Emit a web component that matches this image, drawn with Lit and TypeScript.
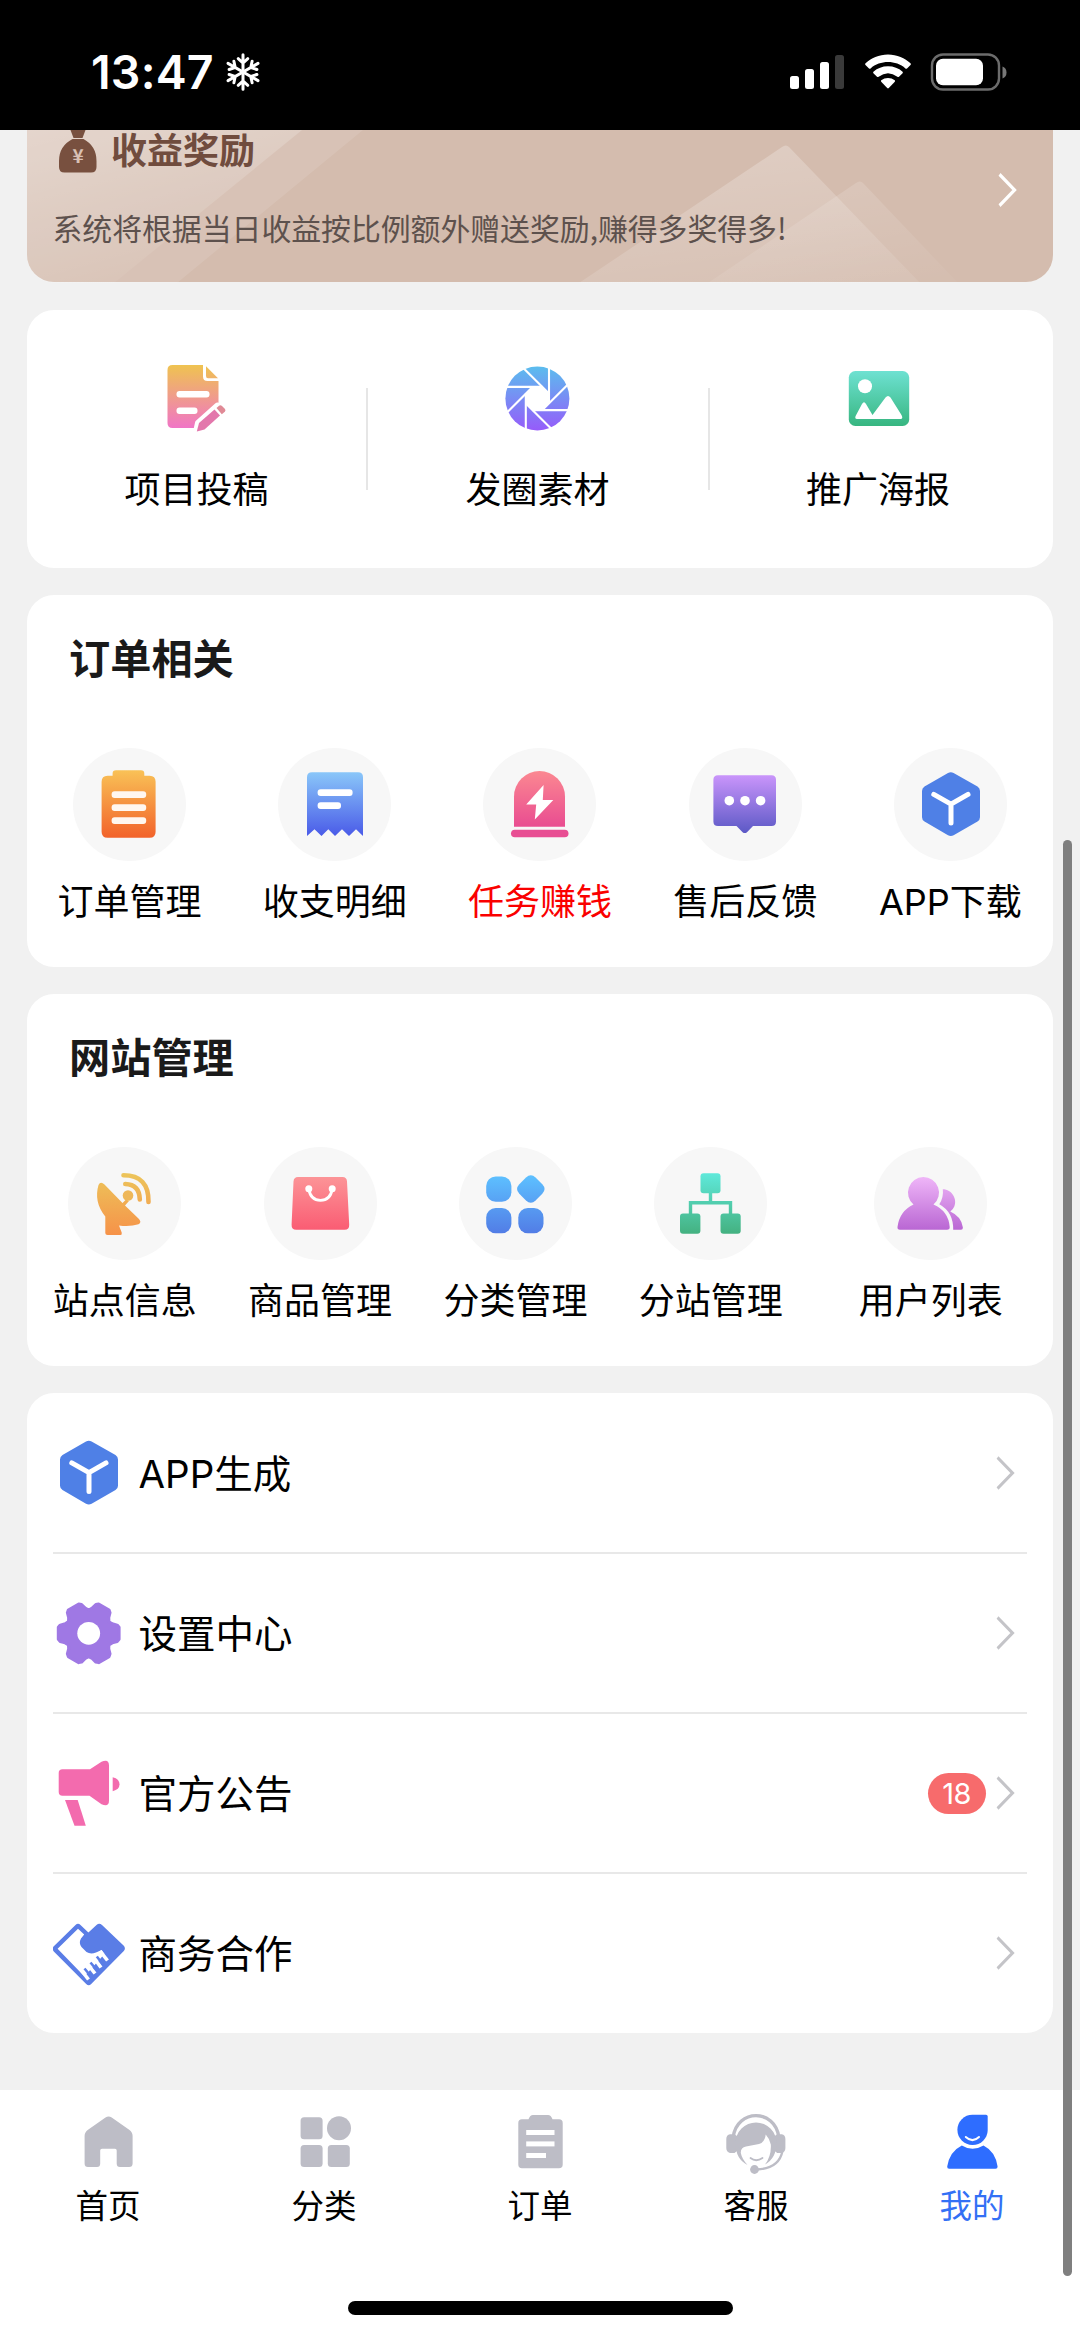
import { LitElement, html, svg, css } from "lit";
import type { TemplateResult } from "lit";
import { customElement } from "lit/decorators.js";
import { classMap } from "lit/directives/class-map.js";

const grad = (id: string, y1: number, y2: number, from: string, to: string) => svg`
  <defs><linearGradient id=${id} gradientUnits="userSpaceOnUse" x1="0" y1=${y1} x2="0" y2=${y2}>
    <stop offset="0" stop-color=${from}></stop><stop offset="1" stop-color=${to}></stop>
  </linearGradient></defs>`;

// Six teeth, each a flat outer edge joined to its neighbours by a sharp valley.
const gearPath = (() => {
  const pts: string[] = [];
  for (let k = 0; k < 6; k++) {
    const a = (k * Math.PI) / 3;
    for (const [x, y] of [[23.5, -9.6], [28.5, -8.2], [30.4, -6], [30.4, 6], [28.5, 8.2], [23.5, 9.6], [20.2, 11.7]]) {
      pts.push(`${(x * Math.cos(a) - y * Math.sin(a)).toFixed(2)} ${(x * Math.sin(a) + y * Math.cos(a)).toFixed(2)}`);
    }
  }
  return `M${pts.join("L")}Z`;
})();

const icons: Record<string, TemplateResult | ReturnType<typeof svg>> = {
  // 70 x 70 shortcuts
  submit: svg`${grad("gSubmit", 2, 66, "#efc350", "#f074c8")}
    <g transform="translate(-1.500 0)">
    <path fill="url(#gSubmit)" d="M12 2H42.500V13.500Q42.500 18 47 18H58V43L42.500 62.500 41.500 65H12Q7 65 7 60V7Q7 2 12 2Z"/>
    <path fill="url(#gSubmit)" d="M45.500 3.200 57.500 15.200H47.500Q45.500 15.200 45.500 13Z"/>
    <rect x="16" y="28" width="33" height="6.500" rx="3" fill="#fff"/>
    <rect x="16" y="44.500" width="21" height="6.500" rx="3" fill="#fff"/>
    <path stroke="#fff" stroke-width="7" stroke-linejoin="round" fill="#fff" d="M36 69 38 60 57 43 65 47 44 66Z"/>
    <path fill="#e377ac" d="M36.300 68.500 38.500 60 54 46.500 59.500 52.500 44 66.500Z"/>
    <path fill="#e08a96" d="M56 45 58.500 42.800Q60 41.800 61.500 43L64.500 46Q65.500 47.500 64.300 48.800L61.300 51.200Z"/></g>`,
  moments: svg`${grad("gMoments", 3, 67, "#5bbdee", "#965bfa")}
    <g transform="translate(-.6 .5)">
    <circle cx="35" cy="35" r="32" fill="url(#gMoments)"/>
    <g fill="none" stroke="#fff" stroke-width="2.100">
      ${[0, 45, 90, 135, 180, 225, 270, 315].map(
        (a) => svg`<path transform=${`rotate(${a} 35 35)`} d="M46.600 1V40"/>`
      )}
    </g>
    <path fill="#fff" transform="translate(35 35)" d="M11.500-4.800V4.800L4.800 11.500H-4.800L-11.500 4.800V-4.800L-4.800-11.500H4.800Z"/></g>`,
  poster: svg`${grad("gPoster", 7, 63, "#6fe2d3", "#37b680")}
    <rect x="4.800" y="8" width="60.400" height="55" rx="6.500" fill="url(#gPoster)"/>
    <circle cx="21" cy="23.200" r="7" fill="#fff"/>
    <path fill="#fff" d="M13 56Q10.500 56 11.600 53L18 41Q20 37.500 22 41L28.500 52 41.500 34.500Q44 31.500 46.500 34.500L57.500 52Q59.500 56 56.500 56Z"/>`,

  // 113 x 113 discs
  order: svg`${grad("gOrder", 22, 90, "#f9c257", "#f2622a")}
    <path fill="url(#gOrder)" d="M43 22.300H68Q71.300 22.300 71.300 25.600V27.700H76.600Q82.600 27.700 82.600 33.700V83.700Q82.600 89.700 76.600 89.700H34.600Q28.600 89.700 28.600 83.700V33.700Q28.600 27.700 34.600 27.700H39.600V25.600Q39.600 22.300 43 22.300Z"/>
    <g fill="#fff7f0"><rect x="38.600" y="43.300" width="34.600" height="6.800" rx="3"/><rect x="38.600" y="56.300" width="34.600" height="6.800" rx="3"/><rect x="38.600" y="69.300" width="34.600" height="6.800" rx="3"/></g>`,
  receipt: svg`${grad("gReceipt", 24, 88, "#8ac7f9", "#4a5be8")}
    <path fill="url(#gReceipt)" d="M34 24.300H80Q85 24.300 85 29.300V88L78 81.300 71 88 64 81.300 57 88 50.300 81.300 43.500 88 36.500 81.300 29 88V29.300Q29 24.300 34 24.300Z"/>
    <g fill="#fff"><rect x="39.600" y="41.300" width="35" height="6.800" rx="3"/><rect x="39.600" y="54.300" width="23.400" height="6.800" rx="3"/></g>`,
  task: svg`${grad("gTask", 23, 82, "#fb8891", "#e84991")}
    <path fill="url(#gTask)" d="M31 78.700V48.500A25.500 25.500 0 0 1 82 48.500V78.700Z"/>
    <rect x="28" y="81.700" width="57.500" height="7.600" rx="3.800" fill="#e84e93"/>
    <path fill="#fff" d="M60.600 37 43.200 56.500H53.200L51.800 71.500 70.300 52H59.800Z"/>`,
  feedback: svg`${grad("gFeedback", 27, 85, "#ca95fb", "#5c59c6")}
    <path fill="url(#gFeedback)" d="M29 27.300H82.500Q87 27.300 87 31.800V73.500Q87 78 82.500 78H64L58 84.200Q55.800 86 53.600 84.200L47.500 78H29Q24.400 78 24.400 73.500V31.800Q24.400 27.300 29 27.300Z"/>
    <g fill="#fff"><circle cx="40.300" cy="52.700" r="4.800"/><circle cx="56" cy="52.700" r="4.800"/><circle cx="71.600" cy="52.700" r="4.800"/></g>`,
  cube: svg`
    <path fill="#4f80e6" d="M54 25Q56.800 23.500 59.600 25L83.500 38.600Q86 40.200 86 43V69.300Q86 72 83.500 73.600L59.600 87.200Q56.800 88.800 54 87.200L30.500 73.600Q28 72 28 69.300V43Q28 40.200 30.500 38.600Z"/>
    <path fill="none" stroke="#fff" stroke-width="5" stroke-linecap="round" stroke-linejoin="round" d="M39.800 46.400 57 56.200 74 46.400M57 56.200V75"/>`,
  site: svg`${grad("gSite", 25, 88, "#ecc65b", "#f69249")}
    <path fill="url(#gSite)" d="M30.500 38Q32.500 34 36.500 37.500L54.500 56 58 52.500 61 54 57 58.500 71 72Q74 75.500 70.500 77.200 62 80 51 78.500L53.700 85.500Q54.300 88 52.500 88H39.500Q37.300 88 37.300 86V69.500Q25.500 55 30.500 38Z"/>
    <circle cx="60" cy="48.500" r="5.300" fill="#eeb758"/>
    <g fill="none" stroke="url(#gSite)" stroke-width="4.600" stroke-linecap="round"><path d="M57.300 37Q71.500 37.500 71.800 52.500"/><path d="M55.500 28.300Q81 28.300 80.500 55"/></g>`,
  goods: svg`${grad("gGoods", 30, 83, "#fc9497", "#fa5c73")}
    <path fill="url(#gGoods)" d="M34 30H78.500Q82.800 30 83 34.500L85.200 77.500Q85.500 82.800 80.500 82.800H32.300Q27.300 82.800 27.600 77.500L29.500 34.500Q29.800 30 34 30Z"/>
    <g fill="#fff"><circle cx="44.800" cy="41.800" r="3.500"/><circle cx="68.200" cy="41.800" r="3.500"/></g>
    <path fill="none" stroke="#fff" stroke-width="2.800" d="M44.800 42Q46.500 53.300 56.500 53.300T68.200 42"/>`,
  category: svg`${grad("gCategory", 29, 86, "#5dc0ff", "#527de6")}
    <g fill="url(#gCategory)"><rect x="27.200" y="29.500" width="25.200" height="25.200" rx="9.500"/><rect x="27.200" y="61" width="25.200" height="25.200" rx="9.500"/><rect x="59.300" y="61" width="25.200" height="25.200" rx="9.500"/>
    <path d="M67 30.500Q71.800 26 76.600 30.500L83.300 37.200Q87.800 42 83.300 46.800L76.600 53.500Q71.800 58 67 53.500L60.300 46.800Q55.800 42 60.300 37.200Z"/></g>`,
  branch: svg`${grad("gBranch", 26, 87, "#5fe9db", "#44b180")}
    <g fill="url(#gBranch)"><rect x="46.500" y="26.300" width="20" height="20" rx="3"/><rect x="26" y="66.400" width="20.400" height="20.300" rx="3"/><rect x="66.500" y="66.400" width="20.200" height="20.300" rx="3"/>
    <path d="M54.800 45H58.200V54H78.200V67H74.800V57.500H38.200V67H34.800V54H54.800Z"/></g>`,
  users: svg`${grad("gUsers", 30, 83, "#efb6f8", "#b966d3")}
    <g fill="url(#gUsers)">
      <path d="M49.200 30A15.600 15.600 0 0 1 59.500 57.500Q74.500 64 75.700 80Q75.900 82.800 73 82.800H26Q23.200 82.800 23.500 80 25.500 64 39.500 57.500A15.600 15.600 0 0 1 49.200 30Z"/>
      <path d="M68.800 42.300C78 42.300 83.500 52.500 80.300 59.500Q79 62.500 76.300 64.500 87.500 69.500 88.900 80.500 89 82.800 87 82.800H79.200Q79.500 65 65.300 57.200 69.800 50.500 68.800 42.300Z"/>
    </g>`,

  // 72 x 72 list rows
  gear: svg`
    <path fill="#9f78e4" stroke="#9f78e4" stroke-width="3" stroke-linejoin="round" transform="translate(35.700 36.300)" d=${gearPath}/>
    <circle cx="35.700" cy="36.300" r="11.400" fill="#fff"/>`,
  notice: svg`<g fill="#f36bae">
    <path d="M9.500 12.300H37L48.500 4.800Q56 1.500 56 8.500V43.500Q56 50.500 48.500 47.200L36.500 38.700H9.500Q5.700 38.700 5.700 35V16Q5.700 12.300 9.500 12.300Z"/>
    <path d="M12 43H24.700L32.800 68.700H21.500Z"/><path d="M59.700 20.300Q66.500 22 66.500 27.300T59.700 34.200Z"/></g>`,
  handshake: svg`
    <path fill="#5a7de6" d="M22.500 8Q25 5.500 27.500 8L35.400 15.500 43.500 8Q46.300 5.500 49 8L70.800 28.800Q73 31.500 70.800 34L38.200 67Q35.700 69.500 33.200 67L.8 34.400Q-1.400 31.800.8 29.200Z"/>
    <path fill="#fff" d="M25 11.800 31.200 17.500 28 21.500Q25.500 26 28.500 30L33.500 35Q37.500 37.500 43 35.500L48.700 33 51.500 37 34 56.500 30.500 58.500 4.600 31.800Z"/>
    <g stroke="#fff" stroke-width="3.600" fill="none"><path d="M47 34 54.500 43.500"/><path d="M41 41 48 50.500"/><path d="M34.500 47 42 56.500"/><path d="M28.500 53.500 35.500 62.500"/></g>
    <g stroke="#5a7de6" stroke-width="2.600" fill="none"><path d="M43.800 39.500 50.500 48"/><path d="M37.500 45.500 44.500 54"/><path d="M31.500 51.500 38.500 60"/></g>`,

  // 62 x 62 tabs
  tabHome: svg`<path fill="currentColor" d="M28.500 4.600Q31.600 2.500 34.700 4.600L52.500 17Q55.600 19.300 55.600 23V50.500Q55.600 54 52 54H43Q39.700 54 39.700 50.500V37.500Q39.700 35.700 38 35.700H25Q23.200 35.700 23.200 37.500V50.500Q23.200 54 20 54H11Q7.600 54 7.600 50.500V23Q7.600 19.300 10.700 17Z"/>`,
  tabCategory: svg`<g fill="currentColor"><rect x="7.600" y="4.300" width="22" height="22" rx="3.500"/><circle cx="46" cy="15.300" r="12"/><rect x="7.600" y="32" width="22" height="22" rx="3.500"/><rect x="34.800" y="32" width="22" height="22" rx="3.500"/></g>`,
  tabOrder: svg`<path fill="currentColor" d="M24 2H39Q42 2 43.500 6.300H50Q53.700 6.300 53.700 10V51.500Q53.700 55.300 50 55.300H13Q9.300 55.300 9.300 51.500V10Q9.300 6.300 13 6.300H19.500Q21 2 24 2Z"/>
    <g fill="#fff"><path d="M17.200 17H45.500V22H17.200Z"/><path d="M17.200 28.400H45.500V33.400H17.200Z"/><path d="M17.200 40H37V45H17.200Z"/></g>`,
  tabService: svg`
    <path fill="none" stroke="currentColor" stroke-width="3.400" d="M8.200 24C12-4.500 50-4.500 53.800 24"/>
    <path fill="currentColor" d="M5 21.300H9.500L12 23V38L9.500 40H5Q1.300 39 1.300 35V26Q1.300 22 5 21.300ZM56.700 21.300H52.200L49.700 23V38L52.200 40H56.700Q60.400 39 60.400 35V26Q60.400 22 56.700 21.300Z"/>
    <path fill="currentColor" d="M22.500 52Q10.500 46 10.500 30A20.500 20.500 0 0 1 51.500 30Q51.500 45 40 51.500Q46.500 43 45.800 31.500 44.500 25.500 40.700 21.500 40 29 34 31L21 33.500Q15.500 34.500 15.800 40 17 46 22.500 52Z"/>
    <path fill="none" stroke="currentColor" stroke-width="1.800" stroke-linecap="round" d="M25.500 45Q31 49.500 37.500 45"/>
    <path fill="none" stroke="currentColor" stroke-width="2.300" d="M57.500 38Q54 55.500 32 56.500"/><circle cx="29.500" cy="56.500" r="4.400" fill="currentColor"/>`,
  tabMine: svg`
    <path fill="currentColor" d="M31.500 1.700H45Q46.700 1.700 46.700 3.400V17A15.150 15.150 0 1 1 31.500 1.700Z"/>
    <path fill="none" stroke="#fff" stroke-width="2" stroke-linecap="round" d="M24.800 24Q31.500 30.300 38 24"/>
    <path fill="currentColor" d="M20.800 32.400Q31.500 39 42.500 32.400 54.500 38.500 56.600 53.500 56.700 55.800 54.500 55.800H8.200Q6 55.800 6.200 53.500 8.500 38.500 20.800 32.400Z"/>`,
};

interface Entry { icon: string; label: string; hot?: boolean; badge?: string }

const shortcuts: Entry[] = [
  { icon: "submit", label: "项目投稿" },
  { icon: "moments", label: "发圈素材" },
  { icon: "poster", label: "推广海报" },
];
const orders: Entry[] = [
  { icon: "order", label: "订单管理" },
  { icon: "receipt", label: "收支明细" },
  { icon: "task", label: "任务赚钱", hot: true },
  { icon: "feedback", label: "售后反馈" },
  { icon: "cube", label: "APP下载" },
];
const sites: Entry[] = [
  { icon: "site", label: "站点信息" },
  { icon: "goods", label: "商品管理" },
  { icon: "category", label: "分类管理" },
  { icon: "branch", label: "分站管理" },
  { icon: "users", label: "用户列表" },
];
const rows: Entry[] = [
  { icon: "cube", label: "APP生成" },
  { icon: "gear", label: "设置中心" },
  { icon: "notice", label: "官方公告", badge: "18" },
  { icon: "handshake", label: "商务合作" },
];
const tabs: Entry[] = [
  { icon: "tabHome", label: "首页" },
  { icon: "tabCategory", label: "分类" },
  { icon: "tabOrder", label: "订单" },
  { icon: "tabService", label: "客服" },
  { icon: "tabMine", label: "我的", hot: true },
];

@customElement("app-root")
export class AppRoot extends LitElement {
  static styles = css`
    :host {
      display: flex; flex-direction: column; position: relative;
      width: 1080px; height: 2338px; overflow: hidden; background: #f1f1f1; color: #000;
      font-family: Inter, "Noto Sans CJK SC", sans-serif; font-size: 36px;
    }
    * { box-sizing: border-box; }
    svg { display: block; flex: none; }
    .status {
      height: 130px; flex: none; background: #000; color: #fff; display: flex;
      align-items: center; padding: 14px 73px 0 91px;
    }
    .time { font: 600 46.500px/56px Inter, sans-serif; letter-spacing: 0.200px; }
    .snow { margin-left: 11px; }
    .signal { margin-left: auto; }
    .wifi { margin-left: 21px; }
    .battery { margin-left: 19px; }

    .content { flex: 1; display: flex; flex-direction: column; gap: 27.600px; padding: 0 27px; min-height: 0; }
    .banner {
      height: 152.300px; flex: none; position: relative; display: flex; justify-content: space-between;
      align-items: flex-start; padding: 0 36px 0 26px; border-radius: 0 0 27px 27px; background: #d4bcae;
    }
    .scenery { position: absolute; inset: 0; border-radius: 0 0 27px 27px; }
    .pitch { position: relative; display: flex; flex-direction: column; }
    .heading { display: flex; align-items: flex-start; gap: 13px; height: 44px; padding-left: 5px; font-size: 36px; line-height: 43px; font-weight: 700; color: #704c3e; }
    .hint { margin-top: 33px; height: 40px; line-height: 40px; font-size: 29.900px; color: #5d514d; white-space: nowrap; font-family: "Noto Sans CJK SC", sans-serif; letter-spacing: -0.050px; margin-left: -0.500px; }
    .banner .go { position: relative; margin-top: 42px; }

    .card { background: #fff; border-radius: 27px; flex: none; }
    .shortcuts { height: 258px; display: grid; grid-template-columns: 340px 342px 339px; }
    .shortcut { display: flex; flex-direction: column; align-items: center; padding-top: 53px; position: relative; }
    .shortcut .label { margin-top: 32px; margin-left: -1px; }
    .shortcut + .shortcut::before { content: ""; position: absolute; left: -1px; top: 78px; width: 2px; height: 102px; background: #e6e6e6; }
    .label { line-height: 50px; height: 50px; white-space: nowrap; }

    .panel { height: 371.300px; display: flex; flex-direction: column; padding-top: 31px; }
    .title { margin: 0; padding-left: 42px; font-family: "Noto Sans CJK SC", sans-serif; font-size: 41.200px; line-height: 60px; font-weight: 700; color: #1a1a1a; }
    .grid { display: grid; grid-template-columns: repeat(5, 1fr); margin-top: 61.500px; }
    .grid.sites { grid-template-columns: repeat(4, 195.400px) 1fr; }
    .cell { display: flex; flex-direction: column; align-items: center; }
    .disc { width: 113px; height: 113px; border-radius: 50%; background: #f7f7f7; }
    .cell .label { margin-top: 16px; }
    .hot .label { color: #fa0000; }

    .list { height: 640px; padding: 0 26px; }
    .row { height: 160px; display: flex; align-items: center; padding-right: 12px; position: relative; font-size: 38.500px; }
    .row + .row::before { content: ""; position: absolute; left: 0; right: 0; top: -1px; height: 2px; background: #e8e8e8; }
    .row .name { margin-left: 13.500px; flex: 1; line-height: 56px; padding-top: 1px; }
    .badge {
      width: 58px; height: 41px; border-radius: 21px; background: #f76b6c; color: #fff; margin-right: 9px;
      font: 400 29px/41px Inter, sans-serif; text-align: center; letter-spacing: -0.500px; padding-right: 1px;
    }

    .tabbar { height: 248px; flex: none; background: #fff; display: flex; flex-direction: column; align-items: center; }
    .tabs { width: 100%; display: grid; grid-template-columns: repeat(5, 1fr); height: 210.500px; flex: none; }
    .tab { display: flex; flex-direction: column; align-items: center; padding-top: 23px; font-size: 32.500px; line-height: 44px; color: #000; }
    .tab svg { color: #bdbdc6; }
    .tab .tabname { margin-top: 10px; }
    .tab.hot { color: #3370f5; }
    .tab.hot svg { color: #2e6dff; }
    .home { width: 385px; height: 14.500px; border-radius: 8px; background: #000; flex: none; }
    .scroll { position: absolute; left: 1063px; top: 840px; width: 9px; height: 1436px; border-radius: 5px; background: #7f7f7f; }
  `;

  private icon(name: string, size: number) {
    return html`<svg width=${size} height=${size} viewBox=${`0 0 ${size} ${size}`}>${icons[name]}</svg>`;
  }

  private rowIcon(name: string) {
    return name === "cube"
      ? html`<svg width="72" height="72" viewBox="21 20.500 72 72">${icons.cube}</svg>`
      : this.icon(name, 72);
  }

  private chevron(color: string, weight = 2.8) {
    return html`<svg class="go" width="20" height="36" viewBox="0 0 20 36"><path d="M2.500 5 17.500 18 2.500 31" transform="translate(0 -3.600) scale(1 1.200)" fill="none" stroke=${color} stroke-width=${weight}/></svg>`;
  }

  private panel(title: string, entries: Entry[], sites: boolean) {
    return html`<section class="card panel">
      <h2 class="title">${title}</h2>
      <div class=${classMap({ grid: true, sites })}>
        ${entries.map((e) => html`<div class=${classMap({ cell: true, hot: !!e.hot })}>
          <div class="disc">${this.icon(e.icon, 113)}</div>
          <span class="label">${e.label}</span>
        </div>`)}
      </div>
    </section>`;
  }

  render() {
    return html`
      <header class="status">
        <span class="time">13:47</span>
        <svg class="snow" width="36" height="40" viewBox="-18 -20 36 40">
          <g fill="none" stroke="#fff" stroke-width="3" stroke-linecap="round">
            ${[0, 60, 120, 180, 240, 300].map((a) => svg`<path transform=${`rotate(${a})`} d="M0 0V-17.300M-4.800-13.300 0-9 4.800-13.300"/>`)}
          </g>
        </svg>
        <svg class="signal" width="54" height="36" viewBox="0 0 54 36">
          <g fill="#fff"><rect y="22" width="9" height="13" rx="2.500"/><rect x="15" y="15" width="9" height="20" rx="2.500"/><rect x="30" y="8" width="9" height="27" rx="2.500"/></g>
          <rect x="45" y="1" width="9" height="34" rx="2.500" fill="#3a3a3a"/>
        </svg>
        <svg class="wifi" width="46" height="36" viewBox="0 0 46 36">
          <g fill="#fff"><path d="M23 0.500C32 .5 40 4 45.500 9.300Q46.200 10.200 45.500 11L42 14.400Q41.200 15 40.400 14.400C31 6 15 6 5.600 14.400Q4.800 15 4 14.400L.5 11Q-.2 10.200.5 9.300C6 4 14 .5 23 .5Z"/>
          <path d="M23 12.300Q31.500 12.300 37.600 17.800 38.200 18.600 37.600 19.300L34 22.800Q33.200 23.400 32.400 22.800 23 15.500 13.600 22.800 12.800 23.400 12 22.800L8.400 19.300Q7.800 18.600 8.400 17.800 14.500 12.300 23 12.300Z"/>
          <path d="M23 24Q26.800 24 29.800 26.300 30.300 27 29.800 27.700L23.800 34Q23 34.800 22.200 34L16.200 27.700Q15.700 27 16.200 26.300 19.200 24 23 24Z"/></g>
        </svg>
        <svg class="battery" width="77" height="38" viewBox="0 0 77 38">
          <rect x="2" y="1.500" width="67" height="35" rx="11" fill="none" stroke="#6c6c6c" stroke-width="2.400"/>
          <rect x="6" y="5.800" width="47" height="26.500" rx="7" fill="#fff"/>
          <path d="M72.500 13.500Q76.500 15 76.500 19.500T72.500 25.500Z" fill="#777"/>
        </svg>
      </header>
      <main class="content">
        <section class="banner">
          <svg class="scenery" width="1026" height="153" viewBox="0 0 1026 153">
            <defs>
              <linearGradient id="gLeft" x1="0" y1="0" x2="0.500" y2="1"><stop offset="0" stop-color="#fff" stop-opacity=".32"/><stop offset="1" stop-color="#fff" stop-opacity=".02"/></linearGradient>
              <linearGradient id="gPeak" x1=".4" y1="0" x2=".75" y2="1"><stop offset="0" stop-color="#fff" stop-opacity=".26"/><stop offset="1" stop-color="#fff" stop-opacity=".08"/></linearGradient>
              <linearGradient id="gPeak2" x1=".3" y1="0" x2=".8" y2="1"><stop offset="0" stop-color="#fff" stop-opacity=".16"/><stop offset="1" stop-color="#fff" stop-opacity=".03"/></linearGradient>
            </defs>
            <path fill="url(#gLeft)" d="M0 0H275L87 153H0Z"/>
            <path fill="#fff" fill-opacity=".1" d="M0 0H336L150 153H0Z"/>
            <path fill="url(#gPeak)" d="M552 153 755 17Q759 14 762 17L893 153Z"/>
            <path fill="url(#gPeak2)" d="M681 153 829 53Q833 50 836 53L931 153Z"/>
          </svg>
          <div class="pitch">
            <div class="heading">
              <svg width="40" height="44" viewBox="0 0 40 44">
                <path fill="#78503f" d="M12.500 0H27.500L24.500 8H15.500ZM14.500 9H25.500Q38.500 16 38.500 31V37Q38.500 42.500 33 42.500H6.500Q1 42.500 1 37V31Q1 16 14.500 9Z"/>
                <text x="20" y="33" text-anchor="middle" font-family="Noto Sans CJK SC, sans-serif" font-weight="700" font-size="19" fill="#d9c0b5">¥</text>
              </svg>
              <span>收益奖励</span>
            </div>
            <div class="hint">系统将根据当日收益按比例额外赠送奖励,赚得多奖得多!</div>
          </div>
          ${this.chevron("#fff", 3)}
        </section>

        <section class="card shortcuts">
          ${shortcuts.map((e) => html`<div class="shortcut">${this.icon(e.icon, 70)}<span class="label">${e.label}</span></div>`)}
        </section>

        ${this.panel("订单相关", orders, false)}
        ${this.panel("网站管理", sites, true)}

        <section class="card list">
          ${rows.map((e) => html`<div class="row">
            ${this.rowIcon(e.icon)}<span class="name">${e.label}</span>
            ${e.badge ? html`<span class="badge">${e.badge}</span>` : null}
            ${this.chevron("#c4c4c8")}
          </div>`)}
        </section>
      </main>
      <footer class="tabbar">
        <nav class="tabs">
          ${tabs.map((e) => html`<div class=${classMap({ tab: true, hot: !!e.hot })}>${this.icon(e.icon, 62)}<span class="tabname">${e.label}</span></div>`)}
        </nav>
        <div class="home"></div>
      </footer>
      <div class="scroll"></div>
    `;
  }
}
